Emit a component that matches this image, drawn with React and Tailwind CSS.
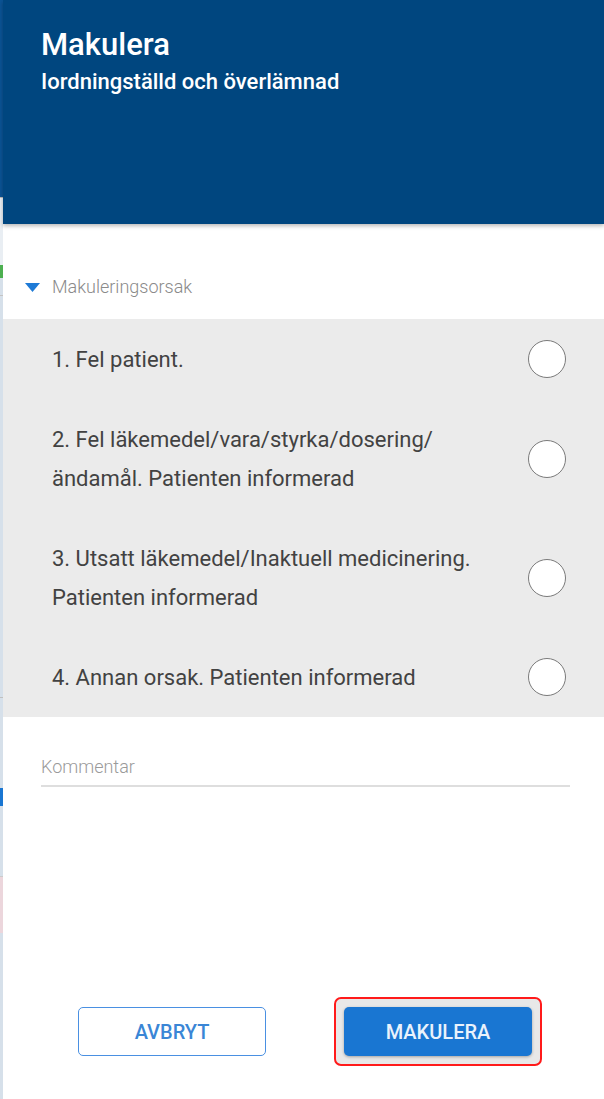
import React from "react";

const reasons = [
  "1. Fel patient.",
  "2. Fel läkemedel/vara/styrka/dosering/ ändamål. Patienten informerad",
  "3. Utsatt läkemedel/Inaktuell medicinering. Patienten informerad",
  "4. Annan orsak. Patienten informerad",
];

function Strip() {
  return (
    <div className="flex w-[3px] shrink-0 flex-col">
      <div className="h-[197px] bg-[#0b5394]" />
      <div className="h-px bg-[#b8b8b8]" />
      <div className="h-[67px] bg-[#e9eef3]" />
      <div className="h-[13px] bg-[#4caf50]" />
      <div className="h-[17px] bg-[#d6e0ea]" />
      <div className="h-px bg-[#c4c4c4]" />
      <div className="h-[401px] bg-[#d6e0ea]" />
      <div className="h-px bg-[#c0c0c0]" />
      <div className="h-[90px] bg-[#d6e0ea]" />
      <div className="h-[18px] bg-[#1976d2]" />
      <div className="h-[70px] bg-[#d6e0ea]" />
      <div className="h-px bg-[#cccccc]" />
      <div className="h-[56px] bg-[#ecd6dc]" />
      <div className="flex-1 bg-[#d6e0ea]" />
    </div>
  );
}

export default function App() {
  return (
    <div
      className="flex h-[1099px] w-[604px] overflow-hidden bg-white"
      style={{ fontFamily: "Roboto, 'Liberation Sans', sans-serif" }}
    >
      <Strip />
      <div className="flex flex-1 flex-col bg-white">
        <div className="relative z-10 h-[224px] shrink-0 bg-[#00467f] px-[38px] pt-[26px] shadow-[0_2px_4px_rgba(0,0,0,0.28)]">
          <div className="text-[31px] font-medium leading-[37px] text-white">Makulera</div>
          <div className="mt-[5px] text-[22px] font-medium leading-[28px] text-white">
            Iordningställd och överlämnad
          </div>
        </div>

        <div className="mt-[51px] flex h-[24px] items-center pl-[22px]">
          <svg width="15" height="9" viewBox="0 0 15 9" className="shrink-0">
            <polygon points="0,0 15,0 7.5,9" fill="#1e7ad6" />
          </svg>
          <span className="ml-[12px] text-[18px] font-light leading-[24px] text-[#8a8a8a]">
            Makuleringsorsak
          </span>
        </div>

        <div className="mt-[20px] bg-[#ebebeb]">
          {reasons.map((r) => (
            <div key={r} className="flex items-center justify-between py-[20.5px] pl-[49px] pr-[38px]">
              <div className="w-[440px] text-[22px] leading-[39px] text-[#424242]">{r}</div>
              <div className="h-[38px] w-[38px] shrink-0 rounded-full border-[1.5px] border-[#7a7a7a] bg-white" />
            </div>
          ))}
        </div>

        <div className="ml-[38px] mr-[34px] mt-[38px] border-b-2 border-[#dedede] pb-[6px]">
          <div className="text-[18px] font-light leading-[24px] text-[#9a9a9a]">Kommentar</div>
        </div>

        <div className="mt-auto flex items-center gap-[68px] pb-[33px] pl-[75px]">
          <button className="flex h-[49px] w-[188px] items-center justify-center rounded-[5px] border border-[#4a90e2] bg-white text-[20px] font-medium text-[#3a86d6]">
            AVBRYT
          </button>
          <div className="rounded-[7px] border-2 border-[#ff1a1a] bg-[#e8e8e8] p-[8px]">
            <button className="flex h-[49px] w-[188px] items-center justify-center rounded-[5px] bg-[#1976d2] text-[20px] font-medium text-[#eaf2fc] shadow-[0_1px_3px_rgba(0,0,0,0.3)]">
              MAKULERA
            </button>
          </div>
        </div>
      </div>
    </div>
  );
}
